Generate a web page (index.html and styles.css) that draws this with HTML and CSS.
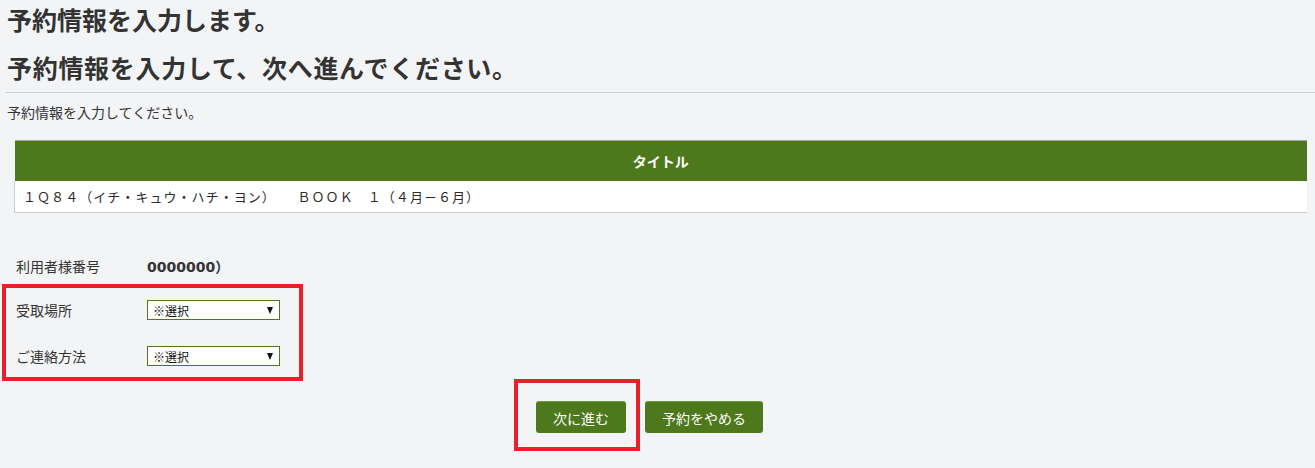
FILE: index.html
```html
<!DOCTYPE html>
<html lang="ja">
<head>
    <meta charset="UTF-8">
    <meta name="viewport" content="width=device-width, initial-scale=1.0">
    <title>予約情報の入力</title>
    <link rel="stylesheet" href="styles.css">
</head>
<body>
    <div class="page">
        <h1 class="page-title">予約情報を入力します。</h1>
        <h2 class="page-lead">予約情報を入力して、次へ進んでください。</h2>
        <hr class="divider">
        <p class="note">予約情報を入力してください。</p>

        <table class="book-table">
            <thead>
                <tr><th>タイトル</th></tr>
            </thead>
            <tbody>
                <tr><td>１Ｑ８４（イチ・キュウ・ハチ・ヨン）　　ＢＯＯＫ　１（４月－６月）</td></tr>
            </tbody>
        </table>

        <div class="reserve-form">
            <div class="form-row first">
                <span class="label">利用者様番号</span>
                <span class="value">0000000）</span>
            </div>
            <div class="pick-group">
                <span class="mark mark-form"></span>
                <div class="form-row">
                    <span class="label">受取場所</span>
                    <span class="select-box">
                        <select><option>※選択</option></select>
                    </span>
                </div>
                <div class="form-row">
                    <span class="label">ご連絡方法</span>
                    <span class="select-box">
                        <select><option>※選択</option></select>
                    </span>
                </div>
            </div>
        </div>

        <div class="actions">
            <div class="btn-mark">
                <button class="btn">次に進む</button>
            </div>
            <button class="btn btn-cancel">予約をやめる</button>
        </div>
    </div>
</body>
</html>
```

FILE: styles.css
```css
body {
    margin: 0;
    background: #f3f4f6;
    color: #333;
    font-family: "Noto Sans CJK JP", "Noto Sans", sans-serif;
}
.page {
    padding-left: 6px;
}
.page-title,
.page-lead {
    margin: 0;
    font-size: 25px;
    line-height: 34px;
    font-weight: bold;
    color: #333;
    padding-left: 1px;
}
.page-title {
    padding-top: 2px;
}
.page-lead {
    margin-top: 14px;
    letter-spacing: 0.7px;
}
.divider {
    border: none;
    border-top: 1px solid #cfcfcf;
    margin: 8px 0 0;
}
.note {
    margin: 9px 0 0;
    font-size: 14px;
    line-height: 20px;
    padding-left: 1px;
}
.book-table {
    width: calc(100% - 16px);
    margin: 18px 8px 0;
    border-collapse: collapse;
}
.book-table th {
    background: #4e781c;
    color: #fff;
    font-size: 14px;
    font-weight: bold;
    height: 40px;
    padding: 0;
    border-top: 1px solid #a8a8a8;
}
.book-table td {
    background: #fff;
    height: 31px;
    padding: 0 0 0 8px;
    font-size: 13px;
    letter-spacing: 1.05px;
    color: #2b2b2b;
    border-left: 1px solid #ccc;
    border-bottom: 1px solid #ccc;
}
.reserve-form {
    margin-top: 32px;
    padding-left: 10px;
}
.form-row {
    display: flex;
    align-items: center;
    height: 46px;
    font-size: 14px;
}
.form-row.first {
    height: 42px;
}
.label {
    width: 131px;
}
.value {
    font-family: "DejaVu Sans", "Noto Sans CJK JP", sans-serif;
    font-weight: bold;
    font-size: 14px;
}
.pick-group {
    position: relative;
}
.mark {
    position: absolute;
    border: 4px solid #e8202a;
    pointer-events: none;
}
.mark-form {
    top: -3px;
    left: -14px;
    width: 293px;
    height: 89px;
}
.select-box {
    position: relative;
    display: inline-block;
}
.select-box::after {
    content: "";
    position: absolute;
    right: 7px;
    top: 7px;
    border-left: 3.5px solid transparent;
    border-right: 3.5px solid transparent;
    border-top: 7px solid #111;
}
.select-box select {
    appearance: none;
    -webkit-appearance: none;
    width: 133px;
    height: 20px;
    border: 1px solid #4e781c;
    border-radius: 0;
    background: #fff;
    padding: 0 0 0 5px;
    font-family: inherit;
    font-size: 12px;
    color: #111;
}
.actions {
    display: flex;
    justify-content: center;
    align-items: flex-start;
    gap: 5px;
    padding-right: 44px;
}
.btn-mark {
    border: 4px solid #e8202a;
    padding: 18px 10px 14px 18px;
}
.btn {
    display: block;
    height: 32px;
    padding: 0 17px;
    border: none;
    border-top: 1px solid #6f9640;
    border-radius: 3px;
    background: #4e781c;
    color: #fff;
    font-family: inherit;
    font-size: 14px;
    cursor: pointer;
}
.btn:hover {
    background: #3f6414;
}
.btn-cancel {
    margin-top: 22px;
}
```
